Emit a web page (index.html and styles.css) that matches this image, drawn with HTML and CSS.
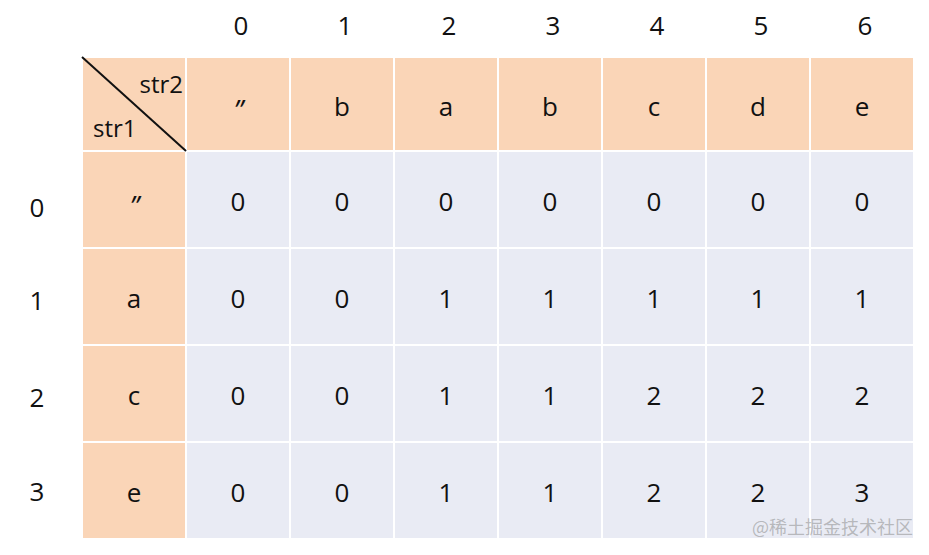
FILE: index.html
```html
<!DOCTYPE html>
<html lang="zh">
<head>
<meta charset="utf-8">
<title>LCS table</title>
<link rel="stylesheet" href="styles.css">
</head>
<body>
<div class="page">
  <div class="blank"></div>
  <div class="col-index">
    <span></span><span>0</span><span>1</span><span>2</span><span>3</span><span>4</span><span>5</span><span>6</span>
  </div>
  <div class="row-index">
    <span></span><span class="r0">0</span><span>1</span><span>2</span><span class="r3">3</span>
  </div>
  <div class="grid">
    <div class="cell head corner">
      <svg class="diag" width="106" height="96" viewBox="0 0 106 96"><line x1="0" y1="0" x2="104" y2="94" stroke="#111" stroke-width="2"/></svg>
      <span class="s2">str2</span>
      <span class="s1">str1</span>
    </div>
    <div class="cell head"><span class="q">”</span></div>
    <div class="cell head">b</div>
    <div class="cell head">a</div>
    <div class="cell head">b</div>
    <div class="cell head">c</div>
    <div class="cell head">d</div>
    <div class="cell head">e</div>

    <div class="cell head"><span class="q">”</span></div>
    <div class="cell">0</div><div class="cell">0</div><div class="cell">0</div><div class="cell">0</div><div class="cell">0</div><div class="cell">0</div><div class="cell">0</div>

    <div class="cell head">a</div>
    <div class="cell">0</div><div class="cell">0</div><div class="cell">1</div><div class="cell">1</div><div class="cell">1</div><div class="cell">1</div><div class="cell">1</div>

    <div class="cell head">c</div>
    <div class="cell">0</div><div class="cell">0</div><div class="cell">1</div><div class="cell">1</div><div class="cell">2</div><div class="cell">2</div><div class="cell">2</div>

    <div class="cell head">e</div>
    <div class="cell">0</div><div class="cell">0</div><div class="cell">1</div><div class="cell">1</div><div class="cell">2</div><div class="cell">2</div><div class="cell">3</div>
  </div>
</div>
<div class="watermark">@稀土掘金技术社区</div>
</body>
</html>
```

FILE: styles.css
```css
html, body {
  margin: 0;
  padding: 0;
  background: #ffffff;
}
body {
  width: 929px;
  height: 555px;
  overflow: hidden;
  position: relative;
  font-family: "Open Sans", "Noto Sans", sans-serif;
  color: #111111;
}
.page {
  display: grid;
  grid-template-columns: 83px 830px;
  grid-template-rows: 58px 480px;
}
.col-index {
  display: grid;
  grid-template-columns: repeat(8, 102px);
  column-gap: 2px;
  align-items: center;
  font-size: 26px;
  line-height: 1;
  padding-bottom: 8px;
}
.col-index span {
  text-align: center;
  padding-left: 6px;
}
.row-index {
  display: grid;
  grid-template-rows: 92px repeat(4, 95px);
  row-gap: 2px;
  font-size: 26px;
  line-height: 1;
  padding-right: 9px;
}
.row-index span {
  display: flex;
  align-items: center;
  justify-content: center;
  padding-top: 6px;
}
.row-index span.r0 {
  padding-top: 14px;
}
.row-index span.r3 {
  padding-top: 0;
}
.grid {
  display: grid;
  grid-template-columns: repeat(8, 102px);
  grid-template-rows: 92px repeat(4, 95px);
  gap: 2px;
}
.cell {
  background: #e9ebf4;
  display: flex;
  align-items: center;
  justify-content: center;
  font-size: 26px;
  line-height: 1;
  padding-top: 3px;
  box-sizing: border-box;
}
.cell.head {
  background: #fad5b7;
}
.q {
  font-style: italic;
  font-size: 27px;
  transform: translateY(4px);
  letter-spacing: -1px;
}
.corner {
  position: relative;
  padding: 0;
}
.diag {
  position: absolute;
  left: -1px;
  top: -1px;
  overflow: visible;
}
.s2, .s1 {
  position: absolute;
  font-size: 24px;
  line-height: 1;
}
.s2 {
  right: 2px;
  top: 14px;
}
.s1 {
  left: 10px;
  top: 58px;
}
.watermark {
  position: absolute;
  left: 752px;
  top: 517px;
  font-family: "Noto Sans CJK SC", sans-serif;
  font-size: 18px;
  line-height: 1;
  color: rgba(140, 140, 140, 0.55);
  white-space: nowrap;
}
```
